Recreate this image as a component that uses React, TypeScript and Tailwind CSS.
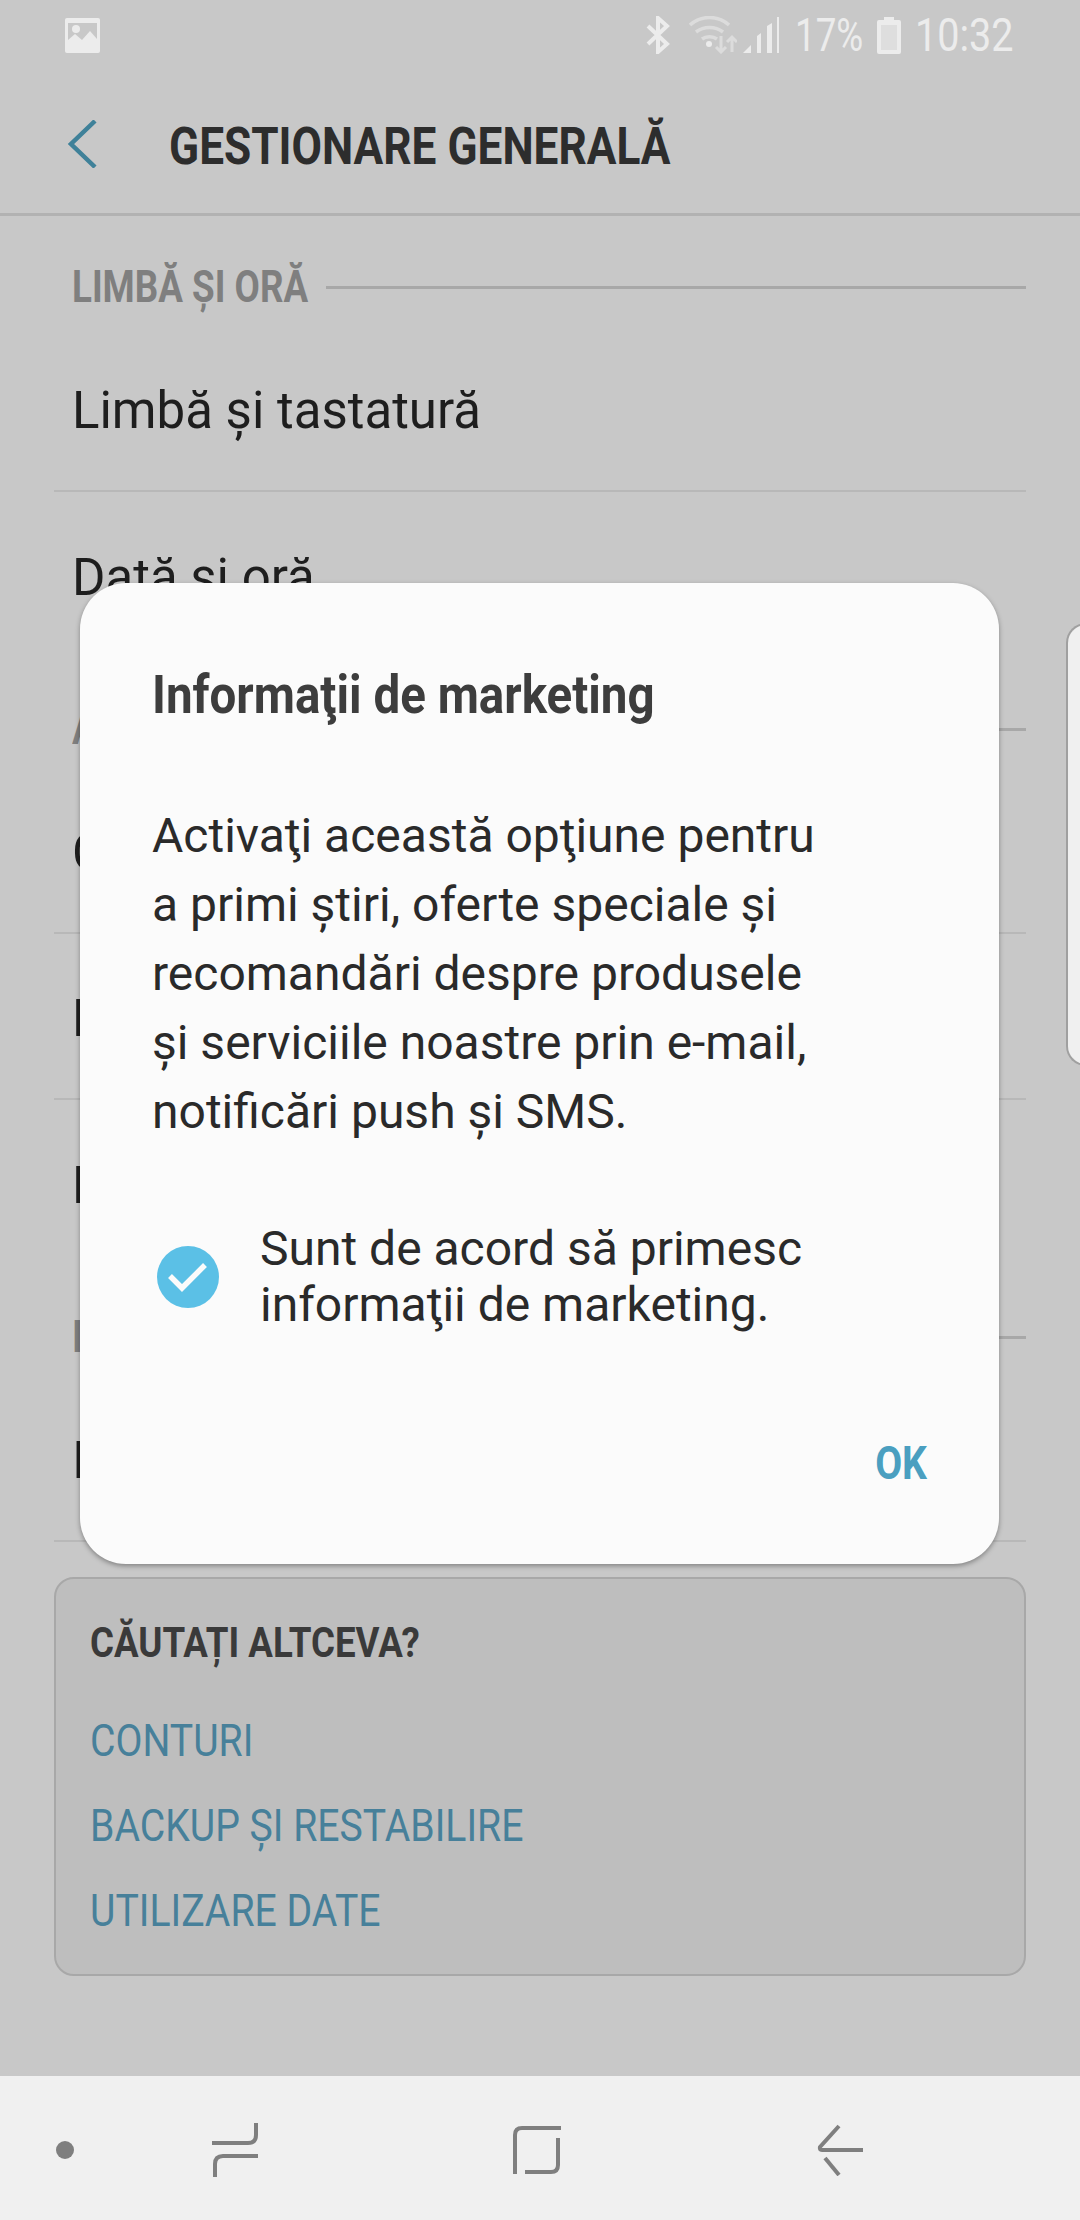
const links = ["CONTURI", "BACKUP ȘI RESTABILIRE", "UTILIZARE DATE"];

function StatusBar() {
  return (
    <div className="flex h-[70px] items-center justify-between pl-[65px] pr-[69px]">
      <svg width="35" height="35" viewBox="0 0 35 35">
        <rect width="35" height="35" rx="2" fill="#ececec" />
        <rect x="3" y="5" width="29" height="26" fill="#c8c8c8" />
        <circle cx="11" cy="11" r="4" fill="#ececec" />
        <path d="M3 31v-9l7-6 7 6 8-9 7 8v10z" fill="#ececec" />
      </svg>
      <div className="flex items-center font-['Roboto'] text-[46px] leading-none text-[#ececec]">
        <svg width="24" height="38" viewBox="0 0 24 38" fill="none" stroke="#ececec" strokeWidth="4">
          <path d="M2 10l19 18-9 8V2l9 8L2 28" />
        </svg>
        <svg width="48" height="38" viewBox="0 0 48 38" fill="none" stroke="#dcdcdc" strokeWidth="3.500" className="ml-[19px]">
          <path d="M1 9c11-10 28-10 39 0M7 16c8-6 19-6 27 0M13 23c4-3 11-3 15 0" />
          <circle cx="20" cy="28" r="3" fill="#ececec" stroke="none" />
          <path d="M32 20v16M27 31l5 5 5-5M43 36V21M38 26l5-5 5 5" strokeWidth="3" />
        </svg>
        <svg width="36" height="38" viewBox="0 0 36 38" fill="#ececec" className="ml-[6px]">
          <path d="M0 37l8-8v8zM14 37V20l4-3v20zM24 37V10l5-3v30zM34 37V1h2v36z" />
        </svg>
        <span className="ml-[16px] block w-[67px] origin-left scale-x-[0.8] whitespace-nowrap">17%</span>
        <svg width="24" height="37" viewBox="0 0 24 37" className="ml-[15px]">
          <path fill="#ececec" d="M7 0h10v3h5a2 2 0 0 1 2 2v30a2 2 0 0 1-2 2H2a2 2 0 0 1-2-2V5a2 2 0 0 1 2-2h5z" />
          <rect x="4" y="8" width="16" height="25" fill="#dedede" />
        </svg>
        <span className="ml-[14px] block w-[96px] origin-left scale-x-[0.86] whitespace-nowrap">10:32</span>
      </div>
    </div>
  );
}

function Header() {
  return (
    <div className="flex h-[146px] items-center border-b-[3px] border-[#b2b2b2] pl-[67px]">
      <svg width="30" height="48" viewBox="0 0 30 48" fill="none" stroke="#3f8199" strokeWidth="4.500" className="mt-[4px]">
        <path d="M28 1L4 24l24 23" />
      </svg>
      <h1 className="ml-[72px] mt-[10px] origin-left scale-x-[0.85] whitespace-nowrap font-['Roboto'] text-[52px] font-bold leading-none text-[#2d2d2d]">
        GESTIONARE GENERALĂ
      </h1>
    </div>
  );
}

function SectionTitle({ label }: { label: string }) {
  return (
    <div className="mb-[17px] flex h-[44px] items-center pl-[72px] pr-[54px]">
      <span className="w-[254px] shrink-0 origin-left scale-x-[0.835] whitespace-nowrap font-['Roboto'] text-[44px] font-bold text-[#7f7f7f]">
        {label}
      </span>
      <div className="h-[3px] flex-1 bg-[#a8a8a8]" />
    </div>
  );
}

function Row({ label, last }: { label: string; last?: boolean }) {
  return (
    <div className={last ? "mx-[54px] flex h-[166px] items-center pl-[18px] pt-[4px]" : "mx-[54px] flex h-[166px] items-center border-b-2 border-[#b8b8b8] pl-[18px] pt-[4px]"}>
      <span className="whitespace-nowrap font-['Roboto'] text-[51px] leading-none text-[#1e1e1e]">{label}</span>
    </div>
  );
}

function Dialog() {
  return (
    <div className="absolute left-[80px] top-[583px] flex h-[981px] w-[919px] flex-col rounded-[46px] bg-[#fbfbfb] pl-[72px] pt-[80px] font-['Roboto'] text-[#2a2a2a] shadow-[0_2px_5px_rgba(0,0,0,0.35)]">
      <h2 className="origin-left scale-x-[0.88] whitespace-nowrap text-[54px] font-bold leading-[64px] text-[#3d3d3d]">
        Informaţii de marketing
      </h2>
      <p className="mt-[74px] whitespace-nowrap text-[48px] leading-[69px]">
        Activaţi această opţiune pentru
        <br />
        a primi știri, oferte speciale și
        <br />
        recomandări despre produsele
        <br />
        și serviciile noastre prin e-mail,
        <br />
        notificări push și SMS.
      </p>
      <div className="ml-[5px] mt-[75px] flex items-center">
        <div className="flex h-[62px] w-[62px] items-center justify-center rounded-full bg-[#5bc0e6]">
          <svg width="40" height="32" viewBox="0 0 40 32" fill="none" stroke="#fbfbfb" strokeWidth="5.500">
            <path d="M2 15l12 12L37 4" />
          </svg>
        </div>
        <div className="ml-[41px] whitespace-nowrap text-[48px] leading-[56px]">
          Sunt de acord să primesc
          <br />
          informaţii de marketing.
        </div>
      </div>
      <span className="mr-[72px] mt-[101px] origin-right scale-x-[0.85] self-end text-[46px] font-bold leading-[58px] text-[#4a9fc0]">
        OK
      </span>
    </div>
  );
}

function NavBar() {
  return (
    <div className="flex h-[144px] items-center bg-[#f0f0f0] pt-[4px]">
      <div className="ml-[56px] h-[18px] w-[18px] rounded-full bg-[#7f7f7f]" />
      <svg width="48" height="56" viewBox="0 0 48 56" fill="none" stroke="#7f7f7f" strokeWidth="4" className="ml-[138px]">
        <path d="M0 21h36q8 0 8-8V1" />
        <path d="M46 34H11q-8 0-8 8v13" />
      </svg>
      <svg width="48" height="52" viewBox="0 0 48 52" fill="none" stroke="#7f7f7f" strokeWidth="4" className="ml-[253px]">
        <path d="M48 4H9q-7 0-7 7v39" />
        <path d="M45 14v27q0 7-7 7H12" />
      </svg>
      <svg width="46" height="52" viewBox="0 0 46 52" fill="none" stroke="#7f7f7f" strokeWidth="4" className="ml-[256px]">
        <path d="M22 2L3 23q-1 3 2 3h41" />
        <path d="M8 34l14 17" />
      </svg>
    </div>
  );
}

export default function App() {
  return (
    <div className="relative h-[2220px] w-[1080px] overflow-hidden bg-[#c8c8c8]">
      <StatusBar />
      <Header />
      <div className="pt-[49px]">
        <SectionTitle label="LIMBĂ ȘI ORĂ" />
        <Row label="Limbă și tastatură" />
        <Row label="Dată și oră" last />
      </div>
      <div className="pt-[49px]">
        <SectionTitle label="ASISTENȚĂ" />
        <Row label="Contactați-ne" />
        <Row label="Raportare" />
        <Row label="Resetare" last />
      </div>
      <div className="pb-[3px] pt-[49px]">
        <SectionTitle label="INFORMAȚII" />
        <Row label="Informații de marketing" />
      </div>
      <div className="mx-[54px] mt-[32px] h-[399px] rounded-[20px] border-2 border-[#a8a8a8] bg-[#bebebe] pl-[34px] pt-[38px] font-['Roboto']">
        <h3 className="origin-left scale-x-[0.873] whitespace-nowrap text-[42px] font-bold leading-[52px] text-[#3a3a3a]">
          CĂUTAȚI ALTCEVA?
        </h3>
        <div className="mt-[29px] flex flex-col">
          {links.map((link) => (
            <div key={link} className="flex h-[85px] items-center">
              <span className="origin-left scale-x-[0.89] whitespace-nowrap text-[44px] leading-none text-[#47809a]">{link}</span>
            </div>
          ))}
        </div>
      </div>
      <div className="mt-[100px]">
        <NavBar />
      </div>
      <Dialog />
      <div className="absolute left-[1066px] top-[623px] h-[443px] w-[30px] rounded-l-[20px] border-2 border-r-0 border-[#a0a0a0] bg-[#f0f0f0]" />
    </div>
  );
}
